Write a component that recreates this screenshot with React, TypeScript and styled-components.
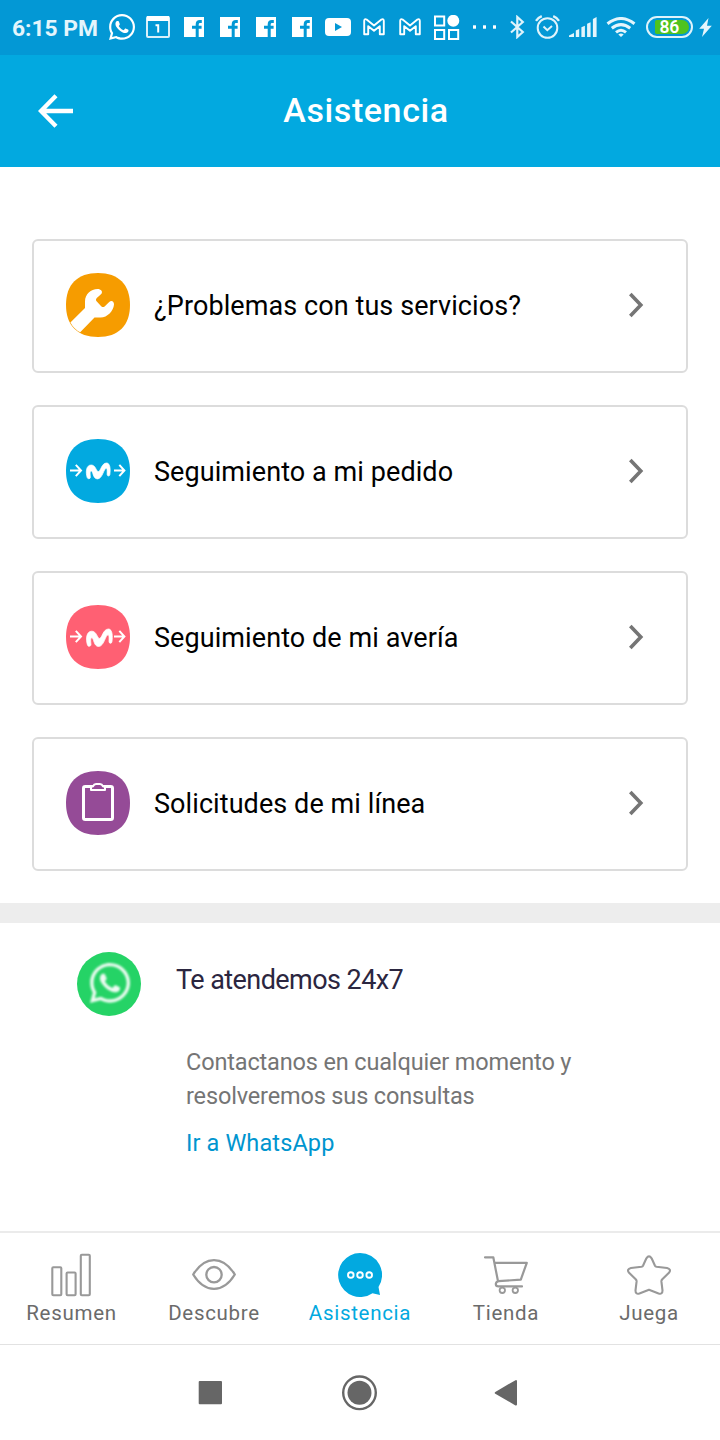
import React from "react";
import styled, { createGlobalStyle } from "styled-components";
import { FaWhatsapp } from "react-icons/fa";

const Global = createGlobalStyle`
  * { box-sizing: border-box; }
  body { margin: 0; background: #fff; font-family: Roboto, "Liberation Sans", sans-serif; }
  svg { display: block; flex: none; }
`;

const Screen = styled.div`
  width: 720px;
  height: 1440px;
  display: flex;
  flex-direction: column;
  background: #fff;
  overflow: hidden;
`;

const StatusBar = styled.div`
  height: 55px;
  flex: none;
  display: flex;
  align-items: flex-start;
  background: #0398d5;
  color: #fff;
`;

const Clock = styled.span`
  width: 97px;
  padding-left: 12px;
  font-size: 22.8px;
  font-weight: 700;
  line-height: 57px;
  white-space: nowrap;
  color: #e4f5fc;
`;

const StatusSlot = styled.span<{ $gap: number; $top: number }>`
  margin-left: ${(p) => p.$gap}px;
  margin-top: ${(p) => p.$top}px;
  flex: none;
`;

const StatusWhatsapp = styled(FaWhatsapp)`
  width: 26px;
  height: 30px;
`;

const Battery = styled.span`
  width: 47px;
  height: 22px;
  margin: 16px 0 0 10px;
  padding: 2px;
  border: 2px solid #dff3fb;
  border-radius: 11px;
  flex: none;
  display: flex;
`;

const BatteryFill = styled.span`
  flex: 1;
  margin-left: 5px;
  padding-right: 10px;
  border-radius: 2px 8px 8px 2px;
  background: #4fc31e;
  color: #fff;
  font-size: 17.5px;
  font-weight: 600;
  line-height: 14px;
  letter-spacing: -0.3px;
  display: flex;
  justify-content: flex-end;
`;

const Header = styled.header`
  height: 112px;
  flex: none;
  display: grid;
  grid-template-columns: 96px 1fr 84px;
  align-items: center;
  background: #02a9e0;
`;

const BackButton = styled.button`
  border: 0;
  padding: 0 0 0 38px;
  background: none;
`;

const Title = styled.h1`
  margin: 0;
  padding-bottom: 2px;
  text-align: center;
  color: #fff;
  font-size: 34px;
  font-weight: 500;
  line-height: 40px;
  letter-spacing: 0.6px;
`;

const CardList = styled.main`
  padding: 72px 32px 32px;
  display: flex;
  flex-direction: column;
  gap: 32px;
`;

const Card = styled.div`
  height: 134px;
  padding: 0 41px 2px 32px;
  border: 2px solid #dcdcdc;
  border-radius: 6px;
  display: flex;
  align-items: center;
  gap: 24px;
`;

const CardLabel = styled.span`
  flex: 1;
  padding-top: 2px;
  color: #000;
  font-size: 27px;
  line-height: 34px;
  letter-spacing: 0.08px;
  white-space: nowrap;
`;

const Divider = styled.div`
  height: 20px;
  flex: none;
  background: #ededed;
`;

const Contact = styled.section`
  height: 308px;
  flex: none;
  padding: 29px 77px 0;
  display: flex;
  gap: 36px;
`;

const WhatsBadge = styled.div`
  width: 64px;
  height: 64px;
  flex: none;
  border-radius: 50%;
  padding: 8px 0 0 13px;
  background: #25d366;
  color: #fff;
`;

const BadgeWhatsapp = styled(FaWhatsapp)`
  width: 40px;
  height: 46px;
  opacity: 0.92;
  filter: blur(0.8px);
`;

const ContactTitle = styled.h2`
  margin: 10px 0 0 -1px;
  color: #2b2640;
  font-size: 27px;
  font-weight: 400;
  line-height: 36px;
  letter-spacing: -0.56px;
`;

const ContactText = styled.p`
  margin: 47px 0 0 9px;
  color: #757575;
  font-size: 23.5px;
  line-height: 34px;
  letter-spacing: -0.15px;
  white-space: nowrap;
`;

const ContactLink = styled.a`
  display: block;
  margin: 13px 0 0 9px;
  color: #0095cf;
  font-size: 23.5px;
  line-height: 34px;
  letter-spacing: 0.12px;
`;

const TabBar = styled.nav`
  height: 114px;
  flex: none;
  display: grid;
  grid-template-columns: 142px 143px 149px 143px 1fr;
  border-top: 2px solid #ebebeb;
  border-bottom: 1px solid #e2e2e2;
`;

const Tab = styled.div<{ $active?: boolean }>`
  display: flex;
  flex-direction: column;
  align-items: center;
  padding-top: 20px;
  gap: 3px;
  color: ${(p) => (p.$active ? "#02a9e0" : "#6b6b6b")};
  font-size: 20.5px;
  line-height: 26px;
`;

const TabLabel = styled.span`
  letter-spacing: 0.7px;
  padding-left: 1px;
`;

const SystemBar = styled.div`
  flex: 1;
  display: flex;
  justify-content: space-between;
  align-items: center;
  padding: 0 202px 0 198px;
`;

const SQUIRCLE = "M32 0C52.5 0 64 11.5 64 32S52.5 64 32 64 0 52.5 0 32 11.5 0 32 0Z";

const ServiceIcon = ({ color, children }: { color: string; children: React.ReactNode }) => (
  <svg width="64" height="64" viewBox="0 0 64 64" fill="none">
    <path d={SQUIRCLE} fill={color} />
    {children}
  </svg>
);

const Wave = ({ large }: { large?: boolean }) => (
  <>
    <path
      d="M4 31.5H14.5M9.8 25.9L15 31.5L9.8 37.1M48 31.5H58M53.3 25.9L58.4 31.5L53.3 37.1"
      stroke="#fff"
      strokeWidth="2"
    />
    <path
      transform={large ? "translate(20.2 24) scale(1.08 1.1)" : "translate(20 24)"}
      d="M1.2 14.6C-.6 9 .2 2 5.2 2C9.7 2 10.2 8.6 12.4 8.6C14.6 8.6 15.5 0 20.6 0C24.4 0 24.6 7 23.8 11.8C23.5 13.4 21.4 13.3 21.2 11.8C21 9.6 21.6 5.3 20.2 5.3C17.8 5.3 16.6 15.9 11.4 15.9C6.8 15.9 7.2 8 5.2 8C3.5 8 4.4 12.4 4.4 14.2C4.3 16 1.8 16.4 1.2 14.6Z"
      fill="#fff"
      stroke="#fff"
      strokeWidth=".7"
    />
  </>
);

const Chevron = () => (
  <svg width="18" height="28" viewBox="0 0 18 28" fill="none">
    <path d="M3.3 3L13.8 14L3.3 25" stroke="#757575" strokeWidth="3.6" />
  </svg>
);

const FacebookGlyph = () => (
  <svg width="20" height="20" viewBox="0 0 20 20" fill="none">
    <path d="M0 0H20V20H0Z" fill="#fff" />
    <path d="M17.8 4.6H16Q13.2 4.6 13.2 7.4V20M8 10.2H17.6" stroke="#0398d5" strokeWidth="3" />
  </svg>
);

const GmailGlyph = () => (
  <svg width="22" height="18" viewBox="0 0 22 18" fill="none">
    <path
      d="M1.2 2.8Q1.5.4 3.6 1.5L11 7.4L18.4 1.5Q20.5.4 20.8 2.8V16.2H16.8V8.2L11 12.8L5.2 8.2V16.2H1.2Z"
      stroke="#fff"
      strokeWidth="1.9"
      strokeLinejoin="round"
    />
  </svg>
);

const services = [
  {
    label: "¿Problemas con tus servicios?",
    icon: (
      <ServiceIcon color="#f69c00">
        <path
          d="M4.4 49.4L19 35V28.5C19 21 25 16 31.5 16C35 16 37 18.5 35.5 20.7L30.8 25C29.6 26.4 29.8 27.3 30.8 28.6L35.2 33.2C36.4 34.3 37.6 34.3 38.6 33.4L43.2 29C45.5 26.6 48.2 28.6 48 31.5C47.4 38 41.5 44.5 34.5 44.5H28.5L14.2 59.3Q8 56 4.4 49.4Z"
          fill="#fff"
        />
      </ServiceIcon>
    ),
  },
  { label: "Seguimiento a mi pedido", icon: <ServiceIcon color="#02a9e0"><Wave /></ServiceIcon> },
  { label: "Seguimiento de mi avería", icon: <ServiceIcon color="#ff6073"><Wave large /></ServiceIcon> },
  {
    label: "Solicitudes de mi línea",
    icon: (
      <ServiceIcon color="#954b97">
        <rect x="17.5" y="15.5" width="29" height="33" rx="1.8" stroke="#fff" strokeWidth="3" />
        <path d="M25 19V17.2Q25 15.5 27 15.3Q28 13 30 13H34Q36 13 37 15.3Q39 15.5 39 17.2V19Z" fill="#954b97" stroke="#fff" strokeWidth="2" strokeLinejoin="round" />
      </ServiceIcon>
    ),
  },
];

const tabs = [
  {
    label: "Resumen",
    icon: (
      <svg width="44" height="44" viewBox="49 1253 44 44" fill="none" stroke="#999" strokeWidth="2.1">
        <rect x="52.3" y="1267.3" width="9" height="28" rx="1" />
        <rect x="66.6" y="1272.5" width="9" height="22.8" rx="1" />
        <rect x="80.8" y="1254.8" width="9" height="40.5" rx="1" />
      </svg>
    ),
  },
  {
    label: "Descubre",
    icon: (
      <svg width="44" height="44" viewBox="192 1253 44 44" fill="none" stroke="#999" strokeWidth="2.3">
        <path d="M193.2 1274.5C205 1255.3 223 1255.3 234.8 1274.5C223 1293.7 205 1293.7 193.2 1274.5Z" strokeLinejoin="round" />
        <circle cx="214" cy="1274.7" r="7.7" />
      </svg>
    ),
  },
  {
    label: "Asistencia",
    active: true,
    icon: (
      <svg width="44" height="44" viewBox="338 1253 44 44" fill="none">
        <path d="M360 1253A22 22 0 0 1 378.5 1287L380 1295L372.5 1293.2A22 22 0 1 1 360 1253Z" fill="#02a9e0" />
        <g stroke="#fff" strokeWidth="1.9">
          <circle cx="350.8" cy="1275" r="2.8" />
          <circle cx="360" cy="1275" r="2.8" />
          <circle cx="369.2" cy="1275" r="2.8" />
        </g>
      </svg>
    ),
  },
  {
    label: "Tienda",
    icon: (
      <svg width="44" height="44" viewBox="484 1253 44 44" fill="none" stroke="#999" strokeWidth="2.2" strokeLinecap="round" strokeLinejoin="round">
        <path d="M485 1257.3H493.3L498 1281.3M494.6 1262.8H526.8L520.8 1279.6L498.5 1281.2Q495.8 1281.8 495.8 1284Q495.8 1286.4 498.5 1286.4H522" />
        <g strokeWidth="1.8">
          <circle cx="502.3" cy="1290.3" r="2.7" />
          <circle cx="515.3" cy="1290.3" r="2.7" />
        </g>
      </svg>
    ),
  },
  {
    label: "Juega",
    icon: (
      <svg width="44" height="44" viewBox="627 1253 44 44" fill="none" stroke="#999" strokeWidth="2.1">
        <path
          d="M646.4 1258.3Q649 1254.5 651.6 1258.3L655 1265.8Q655.4 1266.6 656.5 1266.8L667 1268Q671.5 1269.4 669.2 1272.4L662.3 1279.2Q661.3 1280.3 661.4 1281.4L662.5 1290.5Q662.5 1294.6 658.6 1293.4L649 1289.7L639.4 1293.4Q635.5 1294.6 635.5 1290.5L636.6 1281.4Q636.7 1280.3 635.7 1279.2L628.8 1272.4Q626.5 1269.4 631 1268L641.5 1266.8Q642.6 1266.6 643 1265.8Z"
          strokeLinejoin="round"
        />
      </svg>
    ),
  },
];

export default function App() {
  return (
    <Screen>
      <Global />
      <StatusBar>
        <Clock>6:15 PM</Clock>
        <StatusSlot $gap={12} $top={12}><StatusWhatsapp /></StatusSlot>
        <StatusSlot $gap={11} $top={16}>
          <svg width="24" height="22" viewBox="0 0 24 22" fill="none">
            <rect x="1" y="1" width="22" height="20" rx="1" stroke="#d9f0fa" strokeWidth="2" />
            <path d="M1 0H23V5H1Z" fill="#fff" />
            <path d="M9.5 9.2H12.2V16.5" stroke="#fff" strokeWidth="2" />
          </svg>
        </StatusSlot>
        <StatusSlot $gap={14} $top={17}><FacebookGlyph /></StatusSlot>
        <StatusSlot $gap={16} $top={17}><FacebookGlyph /></StatusSlot>
        <StatusSlot $gap={16} $top={17}><FacebookGlyph /></StatusSlot>
        <StatusSlot $gap={16} $top={17}><FacebookGlyph /></StatusSlot>
        <StatusSlot $gap={13} $top={18}>
          <svg width="26" height="18" viewBox="0 0 26 18">
            <rect width="26" height="18" rx="4" fill="#fff" />
            <path d="M10 5L17 9L10 13Z" fill="#0398d5" />
          </svg>
        </StatusSlot>
        <StatusSlot $gap={12} $top={18}><GmailGlyph /></StatusSlot>
        <StatusSlot $gap={14} $top={18}><GmailGlyph /></StatusSlot>
        <StatusSlot $gap={13} $top={15}>
          <svg width="26" height="25" viewBox="0 0 26 25" fill="none" stroke="#fff" strokeWidth="2">
            <rect x="1" y="1.5" width="9.2" height="9" />
            <rect x="1" y="15" width="9.2" height="9" />
            <rect x="15" y="15" width="9.2" height="9" />
            <circle cx="19.3" cy="5.8" r="6" fill="#fff" stroke="none" />
          </svg>
        </StatusSlot>
        <StatusSlot $gap={12} $top={25}>
          <svg width="25" height="4" viewBox="0 0 25 4" fill="#fff">
            <rect x="1" y=".3" width="3" height="3.4" />
            <rect x="11" y=".3" width="3" height="3.4" />
            <rect x="21" y=".3" width="3" height="3.4" />
          </svg>
        </StatusSlot>
        <StatusSlot $gap={13} $top={15}>
          <svg width="15" height="24" viewBox="0 0 15 24" fill="none">
            <path d="M1 6.5L12.8 17L7.3 22V2L12.8 7L1 17.5" stroke="#dff3fb" strokeWidth="2.2" />
          </svg>
        </StatusSlot>
        <StatusSlot $gap={10} $top={15}>
          <svg width="25" height="24" viewBox="0 0 25 24" fill="none" stroke="#dff3fb" strokeWidth="2">
            <circle cx="12.5" cy="13" r="9.8" />
            <path d="M8.5 11.5L12.3 15.2L17 11" />
            <path d="M1 5.8Q3 2.8 6.8 1.2M24 5.8Q22 2.8 18.2 1.2" strokeWidth="2.4" />
          </svg>
        </StatusSlot>
        <StatusSlot $gap={9} $top={17}>
          <svg width="28" height="20" viewBox="0 0 28 20" fill="#e4f5fc">
            <path d="M0 20V18.5L5 16V20Z" />
            <path d="M6.8 20V13.5L10.2 12V20ZM12.4 20V10.2L15.9 8.7V20ZM18.1 20V6.8L21.6 5.2V20ZM23.9 20V2L27.6 0V20Z" />
          </svg>
        </StatusSlot>
        <StatusSlot $gap={9} $top={17}>
          <svg width="30" height="20" viewBox="0 0 30 20" fill="none" stroke="#e4f5fc" strokeWidth="3">
            <path d="M1.5 6.8Q15-3.8 28.5 6.8" />
            <path d="M5.8 11.3Q15 4 24.2 11.3" />
            <path d="M10 15.4Q15 11.2 20 15.4" />
            <path d="M12.3 17.6Q15 15.5 17.7 17.6L15 20Z" fill="#e4f5fc" stroke="none" />
          </svg>
        </StatusSlot>
        <Battery><BatteryFill>86</BatteryFill></Battery>
        <StatusSlot $gap={6} $top={18}>
          <svg width="13" height="19" viewBox="0 0 13 19" fill="#e4f5fc">
            <path d="M9.5 0L.2 10.8H5L3 19L12.8 7.8H8Z" />
          </svg>
        </StatusSlot>
      </StatusBar>

      <Header>
        <BackButton aria-label="Atrás">
          <svg width="36" height="34" viewBox="0 0 36 34" fill="none" stroke="#fff" strokeWidth="4.3">
            <path d="M3 17H35M18 1.7L3 17L18 32.3" />
          </svg>
        </BackButton>
        <Title>Asistencia</Title>
      </Header>

      <CardList>
        {services.map((s) => (
          <Card key={s.label}>
            {s.icon}
            <CardLabel>{s.label}</CardLabel>
            <Chevron />
          </Card>
        ))}
      </CardList>

      <Divider />

      <Contact>
        <WhatsBadge><BadgeWhatsapp /></WhatsBadge>
        <div>
          <ContactTitle>Te atendemos 24x7</ContactTitle>
          <ContactText>
            Contactanos en cualquier momento y<br />resolveremos sus consultas
          </ContactText>
          <ContactLink>Ir a WhatsApp</ContactLink>
        </div>
      </Contact>

      <TabBar>
        {tabs.map((t) => (
          <Tab key={t.label} $active={t.active}>
            {t.icon}
            <TabLabel>{t.label}</TabLabel>
          </Tab>
        ))}
      </TabBar>

      <SystemBar>
        <svg width="24" height="24" viewBox="0 0 24 24">
          <rect x=".7" y="0" width="23.3" height="23.3" rx="1" fill="#666" />
        </svg>
        <svg width="38" height="36" viewBox="0 0 38 36">
          <circle cx="20.5" cy="17.8" r="16.3" fill="none" stroke="#666" strokeWidth="2.4" />
          <circle cx="20.5" cy="17.8" r="12" fill="#666" />
        </svg>
        <svg width="24" height="28" viewBox="0 0 24 28">
          <path d="M1.8 13.8L22 2V25.6Z" fill="#666" stroke="#666" strokeWidth="2" strokeLinejoin="round" />
        </svg>
      </SystemBar>
    </Screen>
  );
}
